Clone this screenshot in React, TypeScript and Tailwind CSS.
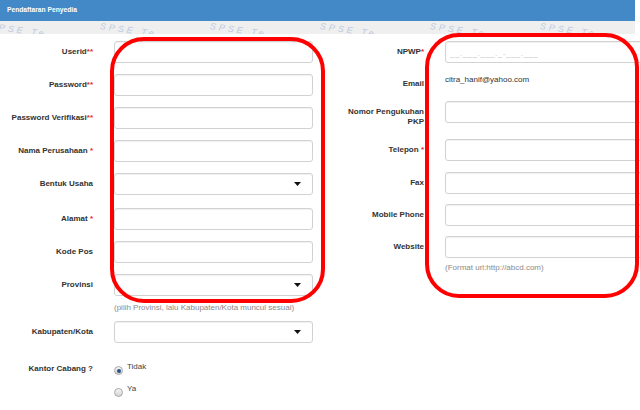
import React from "react";

const font = { fontFamily: '"Liberation Sans", Arial, sans-serif' };

function Req({ n = 1, space = false }: { n?: number; space?: boolean }) {
  return (
    <span className="text-[#e8282b]">
      {space ? " " : ""}
      {n === 2 ? "**" : "*"}
    </span>
  );
}

function Input({ wide = false, children }: { wide?: boolean; children?: React.ReactNode }) {
  return (
    <div
      className={
        (wide ? "w-[204px] " : "w-[199px] ") +
        "ml-[21px] h-[22px] shrink-0 border border-[#d2d2d2] rounded-[3px] bg-white shadow-[inset_0_1px_1px_rgba(0,0,0,0.06)] flex items-center"
      }
    >
      {children}
    </div>
  );
}

function Select() {
  return (
    <Input>
      <div className="flex-1" />
      <svg width="7" height="4" viewBox="0 0 7 4" className="mr-[11px]">
        <path d="M0 0 L7 0 L3.5 4 Z" fill="#111" />
      </svg>
    </Input>
  );
}

function LLabel({ children, w = "w-[93px]" }: { children: React.ReactNode; w?: string }) {
  return (
    <div className={w + " shrink-0 text-right font-bold text-[8px] leading-[10px] text-[#333] pt-[6px]"}>
      {children}
    </div>
  );
}

function Radio({ checked }: { checked?: boolean }) {
  return (
    <span className="mt-[4px] w-[9px] h-[9px] shrink-0 rounded-full border border-[#a8a8a8] bg-linear-to-b from-[#f6f6f6] to-[#d4d4d4] flex items-center justify-center">
      {checked ? <span className="w-[4px] h-[4px] rounded-full bg-[#24528a]" /> : null}
    </span>
  );
}

export default function App() {
  const marks = [0, 1, 2, 3, 4, 5];
  return (
    <div className="relative w-[640px] h-[410px] overflow-hidden bg-white" style={font}>
      {/* header */}
      <div className="w-[635px] h-[21px] bg-[#4389c8] flex items-center pl-[7px] text-white font-bold text-[6.7px]">
        Pendaftaran Penyedia
      </div>
      {/* watermark strip */}
      <div className="w-[635px] h-[13px] bg-[#efefef] overflow-hidden flex">
        <div className="flex -ml-[10px]">
          {marks.map((i) => (
            <div key={i} className="w-[110px] h-[13px] shrink-0 pt-[0px]">
              <span className="block rotate-[8deg] origin-left text-[9px] leading-[10px] tracking-[3px] italic text-[#bccade] whitespace-nowrap">
                SPSE Te
              </span>
            </div>
          ))}
        </div>
      </div>

      {/* body */}
      <div className="flex pt-[7px]">
        {/* left column */}
        <div className="w-[330px] shrink-0 flex flex-col">
          <div className="flex items-start">
            <LLabel>
              Userid<Req n={2} />
            </LLabel>
            <Input />
          </div>
          <div className="flex items-start mt-[11px]">
            <LLabel>
              Password<Req n={2} />
            </LLabel>
            <Input />
          </div>
          <div className="flex items-start mt-[11px]">
            <LLabel>
              Password Verifikasi<Req n={2} />
            </LLabel>
            <Input />
          </div>
          <div className="flex items-start mt-[11px]">
            <LLabel>
              Nama Perusahaan<Req space />
            </LLabel>
            <Input />
          </div>
          <div className="flex items-start mt-[11px]">
            <LLabel>Bentuk Usaha</LLabel>
            <Select />
          </div>
          <div className="flex items-start mt-[13px]">
            <LLabel>
              Alamat<Req space />
            </LLabel>
            <Input />
          </div>
          <div className="flex items-start mt-[11px]">
            <LLabel>Kode Pos</LLabel>
            <Input />
          </div>
          <div className="flex items-start mt-[11px]">
            <LLabel>Provinsi</LLabel>
            <Select />
          </div>
          <div className="ml-[114px] mt-[7px] text-[8px] leading-[10px] text-[#8a8a8a] whitespace-nowrap">
            (pilih Provinsi, lalu Kabupaten/Kota muncul sesuai)
          </div>
          <div className="flex items-start mt-[8px]">
            <LLabel>Kabupaten/Kota</LLabel>
            <Select />
          </div>
          <div className="flex items-start mt-[19px]">
            <div className="w-[93px] shrink-0 text-right font-bold text-[8px] leading-[10px] text-[#333] pt-[2px]">
              Kantor Cabang ?
            </div>
            <div className="ml-[21px] flex flex-col text-[8px] leading-[10px] text-[#444]">
              <div className="flex items-start gap-[4px]">
                <Radio checked />
                <span>Tidak</span>
              </div>
              <div className="flex items-start gap-[4px] mt-[9px]">
                <Radio />
                <span>Ya</span>
              </div>
            </div>
          </div>
        </div>

        {/* right column */}
        <div className="flex flex-col">
          <div className="flex items-start">
            <LLabel w="w-[94px]">
              NPWP<Req />
            </LLabel>
            <Input wide>
              <span className="pl-[4px] pt-[4px] text-[8px] text-[#c4c4c4] tracking-[0.5px] whitespace-nowrap">
                __.___.___._-___.___
              </span>
            </Input>
          </div>
          <div className="flex items-start mt-[10px] h-[22px]">
            <LLabel w="w-[94px]">Email</LLabel>
            <div className="ml-[21px] pt-[2px] text-[8px] leading-[10px] text-[#333] whitespace-nowrap">
              citra_hanif@yahoo.com
            </div>
          </div>
          <div className="flex items-start mt-[6px]">
            <LLabel w="w-[94px]">
              Nomor Pengukuhan
              <br />
              PKP
            </LLabel>
            <Input wide />
          </div>
          <div className="flex items-start mt-[12px]">
            <LLabel w="w-[94px]">
              Telepon<Req space />
            </LLabel>
            <Input wide />
          </div>
          <div className="flex items-start mt-[11px]">
            <LLabel w="w-[94px]">Fax</LLabel>
            <Input wide />
          </div>
          <div className="flex items-start mt-[10px]">
            <LLabel w="w-[94px]">Mobile Phone</LLabel>
            <Input wide />
          </div>
          <div className="flex items-start mt-[10px]">
            <LLabel w="w-[94px]">Website</LLabel>
            <Input wide />
          </div>
          <div className="ml-[115px] mt-[5px] text-[8px] leading-[10px] text-[#8a8a8a] whitespace-nowrap">
            (Format url:http://abcd.com)
          </div>
        </div>
      </div>

      {/* red annotation outlines */}
      <div className="absolute left-[110px] top-[37px] w-[215px] h-[266px] border-[4px] border-[#ff0000] rounded-[34px] pointer-events-none" />
      <div className="absolute left-[425px] top-[33px] w-[214px] h-[265px] border-[4px] border-[#ff0000] rounded-[34px] pointer-events-none" />
    </div>
  );
}
